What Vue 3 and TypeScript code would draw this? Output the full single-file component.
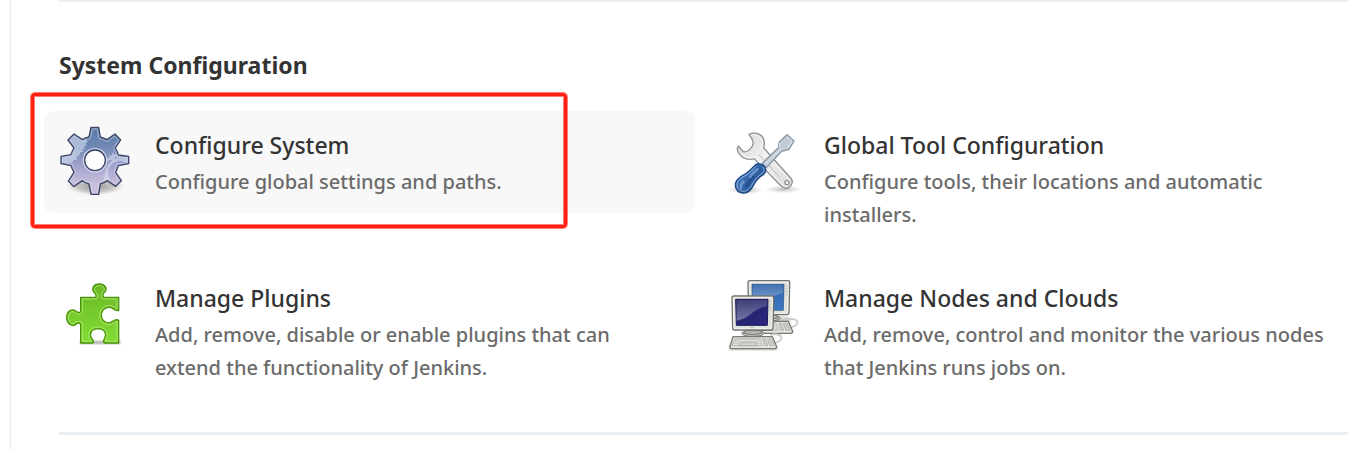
<script setup lang="ts">
interface Tool {
  id: 'gear' | 'tools' | 'puzzle' | 'nodes'
  title: string
  text: string
  view: string
  active?: boolean
}

const tools: Tool[] = [
  { id: 'gear', title: 'Configure System', text: 'Configure global settings and paths.', view: '27 33 216 216', active: true },
  { id: 'tools', title: 'Global Tool Configuration', text: 'Configure tools, their locations and automatic installers.', view: '24 18 216 216' },
  { id: 'puzzle', title: 'Manage Plugins', text: 'Add, remove, disable or enable plugins that can extend the functionality of Jenkins.', view: '12 12 216 216' },
  { id: 'nodes', title: 'Manage Nodes and Clouds', text: 'Add, remove, control and monitor the various nodes that Jenkins runs jobs on.', view: '24 21 216 216' },
]
</script>

<template>
  <main class="panel">
    <section class="group">
      <h2>System Configuration</h2>
      <div class="grid">
        <div v-for="tool in tools" :key="tool.id" class="cell">
          <a href="#" class="card" :class="{ active: tool.active }">
            <svg class="icon" :viewBox="tool.view" aria-hidden="true">
              <template v-if="tool.id === 'gear'">
                <defs>
                  <linearGradient id="gearFill" x1="0" y1="0" x2="0" y2="1">
                    <stop offset="0" stop-color="#587aa6" />
                    <stop offset="0.3" stop-color="#7189b5" />
                    <stop offset="0.6" stop-color="#a5a6cf" />
                    <stop offset="0.85" stop-color="#c9bedd" />
                    <stop offset="1" stop-color="#c8c0de" />
                  </linearGradient>
                  <radialGradient id="gearShade">
                    <stop offset="0" stop-color="#555" stop-opacity="0.6" />
                    <stop offset="0.6" stop-color="#777" stop-opacity="0.4" />
                    <stop offset="1" stop-color="#999" stop-opacity="0" />
                  </radialGradient>
                  <clipPath id="gearClip">
                    <path d="M123 37H146L151 66Q161 69 171 74L195 57L212 75L196 99Q202 109 205 120L236 124V146L205 152Q202 162 197 172L214 197L197 214L172 197Q162 204 151 207L146 238H123L117 207Q106 204 97 197L71 215L55 198L72 172Q66 162 63 152L33 146V124L63 119Q66 108 72 99L54 75L72 57L97 74Q107 68 117 66Z" />
                  </clipPath>
                </defs>
                <ellipse cx="136" cy="214" rx="88" ry="27" fill="url(#gearShade)" />
                <path fill="url(#gearFill)" d="M123 37H146L151 66Q161 69 171 74L195 57L212 75L196 99Q202 109 205 120L236 124V146L205 152Q202 162 197 172L214 197L197 214L172 197Q162 204 151 207L146 238H123L117 207Q106 204 97 197L71 215L55 198L72 172Q66 162 63 152L33 146V124L63 119Q66 108 72 99L54 75L72 57L97 74Q107 68 117 66Z" />
                <g clip-path="url(#gearClip)" fill="#dce8f4" opacity="0.55">
                  <path d="M30 45H118V66L108 74L114 81L106 85L110 91L102 94L105 101L97 102L99 110L90 112L88 121L80 124V134L70 136L66 145L59 141L52 146L46 142L30 145Z" />
                  <path d="M240 126H216Q181 128 168 162L164 180L157 183L163 189L158 197L168 200L183 205L178 190Q171 174 175 162Q186 140 208 137L240 145Z" />
                  <path d="M169 131L179 128L177 120L185 123L188 112L194 119L203 116L210 128L196 126L191 138L181 134L173 139Z" />
                </g>
                <path fill="none" stroke="#ced9ea" stroke-width="3" opacity="0.65" d="M127 42H142L147 70Q161 73 171 80L194 63L206 76L191 99Q199 110 201 124L231 128V142L201 148Q198 161 191 172L208 196L197 208L172 192Q160 200 147 203L142 233H127L121 203Q108 200 97 192L72 209L61 198L77 172Q70 161 67 148L38 142V128L67 123Q70 110 77 99L60 75L72 63L97 79Q108 73 121 70Z" />
                <path fill="none" stroke="#3d4667" stroke-width="4" stroke-linejoin="round" d="M123 37H146L151 66Q161 69 171 74L195 57L212 75L196 99Q202 109 205 120L236 124V146L205 152Q202 162 197 172L214 197L197 214L172 197Q162 204 151 207L146 238H123L117 207Q106 204 97 197L71 215L55 198L72 172Q66 162 63 152L33 146V124L63 119Q66 108 72 99L54 75L72 57L97 74Q107 68 117 66Z" />
                <circle cx="135" cy="136" r="35" fill="none" stroke="#d0d7eb" stroke-width="4" />
                <circle cx="135" cy="136" r="31" fill="#fff" stroke="#3d4667" stroke-width="4" />
              </template>

              <template v-else-if="tool.id === 'tools'">
                <defs>
                  <linearGradient id="wrench" x1="0" y1="0" x2="1" y2="1">
                    <stop offset="0" stop-color="#d5d6d3" />
                    <stop offset="0.45" stop-color="#f0f1ef" />
                    <stop offset="1" stop-color="#dcdddb" />
                  </linearGradient>
                  <linearGradient id="handle" x1="0" y1="0" x2="1" y2="0.8">
                    <stop offset="0" stop-color="#6a9ad5" />
                    <stop offset="0.5" stop-color="#3466aa" />
                    <stop offset="1" stop-color="#194680" />
                  </linearGradient>
                  <radialGradient id="toolShade">
                    <stop offset="0" stop-color="#777" stop-opacity="0.5" />
                    <stop offset="1" stop-color="#999" stop-opacity="0" />
                  </radialGradient>
                </defs>
                <ellipse cx="76" cy="210" rx="55" ry="13" fill="url(#toolShade)" />
                <ellipse cx="190" cy="208" rx="55" ry="12" fill="url(#toolShade)" />
                <path fill="url(#wrench)" stroke="#92938f" stroke-width="4" stroke-linejoin="round" d="M87 43C100 36 122 39 130 55C136 66 132 77 131 84L212 174C221 184 216 196 207 202C197 208 188 203 181 196L103 116C88 121 69 117 59 104C51 94 51 84 55 78L69 94C77 99 91 90 97 78C102 67 99 59 87 43Z" />
                <path fill="none" stroke="#fff" stroke-width="3" opacity="0.7" d="M94 45C109 42 122 50 127 62C129 70 127 78 126 85L207 178C214 187 205 198 198 199C191 199 185 193 181 189L104 111C88 117 71 112 62 101" />
                <path fill="none" stroke="#babcba" stroke-width="5" stroke-linecap="round" d="M120 106L178 168" />
                <path fill="none" stroke="#f9f9f8" stroke-width="3" stroke-linecap="round" d="M122 106L180 168" />
                <circle cx="201" cy="188" r="6" fill="#fafafa" stroke="#8f908d" stroke-width="4" />
                <path fill="#c3cdd7" stroke="#8695a4" stroke-width="4" stroke-linejoin="round" d="M201 44L222 63L207 88L185 94L139 143L127 130L175 83L178 66Z" />
                <path fill="none" stroke="#e5ebf0" stroke-width="3" d="M201 49L217 63L204 84M183 87L134 134M181 68L177 83" />
                <path fill="url(#handle)" stroke="#204a87" stroke-width="4" stroke-linejoin="round" d="M107 134C114 129 126 131 133 139C140 147 137 158 131 163C119 170 109 179 102 193C95 207 84 220 70 219C56 220 45 209 46 194C47 178 61 169 75 162C90 155 96 142 107 134Z" />
                <path fill="none" stroke="#91b5df" stroke-width="3" d="M107 139C98 146 92 159 77 166C63 174 51 181 51 195C51 205 58 213 68 214C81 215 90 205 97 192C106 175 117 167 129 158C134 153 133 145 127 140" />
                <path fill="none" stroke="#8bb1df" stroke-width="8" stroke-linecap="round" opacity="0.65" d="M112 148Q98 157 91 171M70 185Q60 194 63 204" />
                <path fill="none" stroke="#194680" stroke-width="7" stroke-linecap="round" opacity="0.6" d="M101 169Q88 180 79 199" />
              </template>

              <template v-else-if="tool.id === 'puzzle'">
                <defs>
                  <linearGradient id="leaf" x1="0" y1="0" x2="0" y2="1">
                    <stop offset="0" stop-color="#69b823" />
                    <stop offset="1" stop-color="#82dd35" />
                  </linearGradient>
                  <filter id="soft"><feGaussianBlur stdDeviation="3" /></filter>
                </defs>
                <path fill="#777" opacity="0.6" filter="url(#soft)" d="M75 198H196V207H75Z" />
                <path fill="url(#leaf)" stroke="#4b9609" stroke-width="4" stroke-linejoin="round" d="M77 67H122C126 61 122 57 117 52C108 42 116 27 133 27C149 27 159 41 149 51C143 57 142 62 146 67H191V106C184 110 180 104 173 100C158 91 139 104 139 120C139 138 157 150 173 139C180 134 185 132 191 136V204H148C142 199 146 195 149 190C156 178 150 162 130 161C109 161 102 177 109 189C115 197 119 201 113 204H77V148C72 141 67 144 61 149C51 157 35 145 35 128C35 109 50 99 62 108C68 113 72 116 77 110Z" />
                <path fill="none" stroke="#b1e57a" stroke-width="3" stroke-linejoin="round" opacity="0.9" d="M82 72H124C132 64 127 55 121 49C114 41 121 32 133 32C145 32 151 41 146 48C139 55 136 64 144 72H186V101C184 102 180 98 176 95C158 85 134 98 134 120C134 143 158 156 175 144C180 140 183 138 186 139V199H151L153 193C162 174 151 157 130 156C106 156 95 174 104 191L109 199H82V145C75 136 65 138 58 144C50 150 40 139 40 128C40 115 50 106 59 112C68 119 75 121 82 111Z" />
              </template>

              <template v-else>
                <defs>
                  <linearGradient id="screenFront" x1="0" y1="0" x2="1" y2="1">
                    <stop offset="0" stop-color="#242760" />
                    <stop offset="1" stop-color="#2b2480" />
                  </linearGradient>
                  <linearGradient id="screenBack" x1="0" y1="0" x2="0" y2="1">
                    <stop offset="0" stop-color="#2d61a6" />
                    <stop offset="1" stop-color="#3f79c5" />
                  </linearGradient>
                  <linearGradient id="glare" x1="0" y1="0" x2="0" y2="1">
                    <stop offset="0" stop-color="#fff" stop-opacity="0.12" />
                    <stop offset="1" stop-color="#fff" stop-opacity="0.36" />
                  </linearGradient>
                  <g id="terminal">
                    <ellipse cx="99" cy="184" rx="34" ry="9" fill="#d3d7cf" stroke="#777a74" stroke-width="3" />
                    <path fill="#b1b5ae" stroke="#787b76" stroke-width="3" d="M78 174H119L127 184Q101 193 70 184Z" />
                    <path fill="none" stroke="#b9bab8" stroke-width="5" d="M151 190C166 182 187 189 184 200C181 209 170 212 159 214" />
                    <path fill="none" stroke="#e5e5e3" stroke-width="2" d="M151 190C166 182 187 189 184 200C181 209 170 212 159 214" />
                    <path fill="#e4e6e1" stroke="#777a74" stroke-width="4" stroke-linejoin="round" d="M39 194H157L170 224Q170 230 164 230H33Q29 230 30 225Z" />
                    <path fill="#c8ccc4" stroke="#a9ada5" stroke-width="2" d="M44 200H121L127 221H36ZM128 200H137L143 221H134ZM142 200H155L163 221H149Z" />
                    <path fill="none" stroke="#eef0ec" stroke-width="2" d="M44 205H122M42 211H124M39 217H125" />
                    <path fill="#d5d8d1" stroke="#999d95" stroke-width="2" d="M61 212H109L111 221H56Z" />
                    <path fill="#e0e2dc" stroke="#6e716b" stroke-width="4" stroke-linejoin="round" d="M42 72H156Q161 72 161 77L159 168Q158 174 153 174H44Q38 174 38 168L36 78Q36 72 42 72Z" />
                    <path fill="none" stroke="#fafbf9" stroke-width="2" d="M43 76H155Q157 76 157 79L155 166Q155 170 151 170H46Q42 170 42 166L40 79Q40 76 43 76Z" />
                    <path stroke="#a5a9a0" stroke-width="2" d="M148 87H154M148 96H154M148 105H154M148 114H154M91 167H103" />
                  </g>
                  <filter id="nodeBlur"><feGaussianBlur stdDeviation="4" /></filter>
                </defs>
                <path fill="#777" opacity="0.4" filter="url(#nodeBlur)" d="M28 215H165L172 235H28ZM158 135H209V153H158Z" />
                <use href="#terminal" x="48" y="-46" />
                <path fill="url(#screenBack)" stroke="#20518d" stroke-width="2" d="M96 37H192L190 115H97Z" />
                <path fill="url(#glare)" d="M98 39H190L189 64Q158 71 136 86Q117 99 98 101Z" />
                <use href="#terminal" />
                <path fill="url(#screenFront)" stroke="#191b59" stroke-width="3" d="M47 82H144L142 160H49Z" />
                <path fill="url(#glare)" d="M49 84H142L141 101Q115 108 92 126Q72 143 50 146Z" />
              </template>
            </svg>
            <span class="words">
              <span class="title">{{ tool.title }}</span>
              <span class="text">{{ tool.text }}</span>
            </span>
          </a>
          <span v-if="tool.active" class="marker"></span>
        </div>
      </div>
    </section>
  </main>
</template>

<style>
body {
  margin: 0;
  background: #fff;
}
</style>

<style scoped>
.panel {
  margin-left: 10px;
  padding: 0 11px 0 48px;
  border-left: 1px solid #eaeaea;
  overflow: hidden;
  font-family: "Segoe UI", "Noto Sans", "Open Sans", sans-serif;
}
.group {
  border-top: 2px solid #e9eef2;
  border-bottom: 3px solid #e9eef2;
  margin-bottom: 16px;
  padding: 47px 0 33px;
}
h2 {
  margin: 0 0 30px;
  color: #333;
  font-size: 23px;
  line-height: 32px;
  font-weight: 700;
}
.grid {
  display: grid;
  grid-template-columns: repeat(2, minmax(0, 1fr));
  gap: 18px;
  margin: 0 -16px 0 -15px;
}
.cell {
  position: relative;
}
.card {
  display: flex;
  gap: 24px;
  padding: 15px;
  border-radius: 9px;
  color: #333;
  text-decoration: none;
}
.card.active {
  background: #f8f8f8;
}
.icon {
  flex: none;
  width: 72px;
  height: 72px;
}
.words {
  min-width: 0;
}
.title,
.text {
  display: block;
}
.title {
  font-size: 23px;
  line-height: 39px;
  font-weight: 500;
}
.text {
  color: #6b6b6b;
  font-size: 20px;
  line-height: 33px;
  font-weight: 500;
}
.marker {
  position: absolute;
  left: -13px;
  top: -18px;
  width: 530px;
  height: 129px;
  border: 3px solid #ff2014;
  border-radius: 4px;
  box-shadow: 0 0 0 1px #ff7e77, inset 0 0 0 1px #ff7e77;
  pointer-events: none;
}
</style>
